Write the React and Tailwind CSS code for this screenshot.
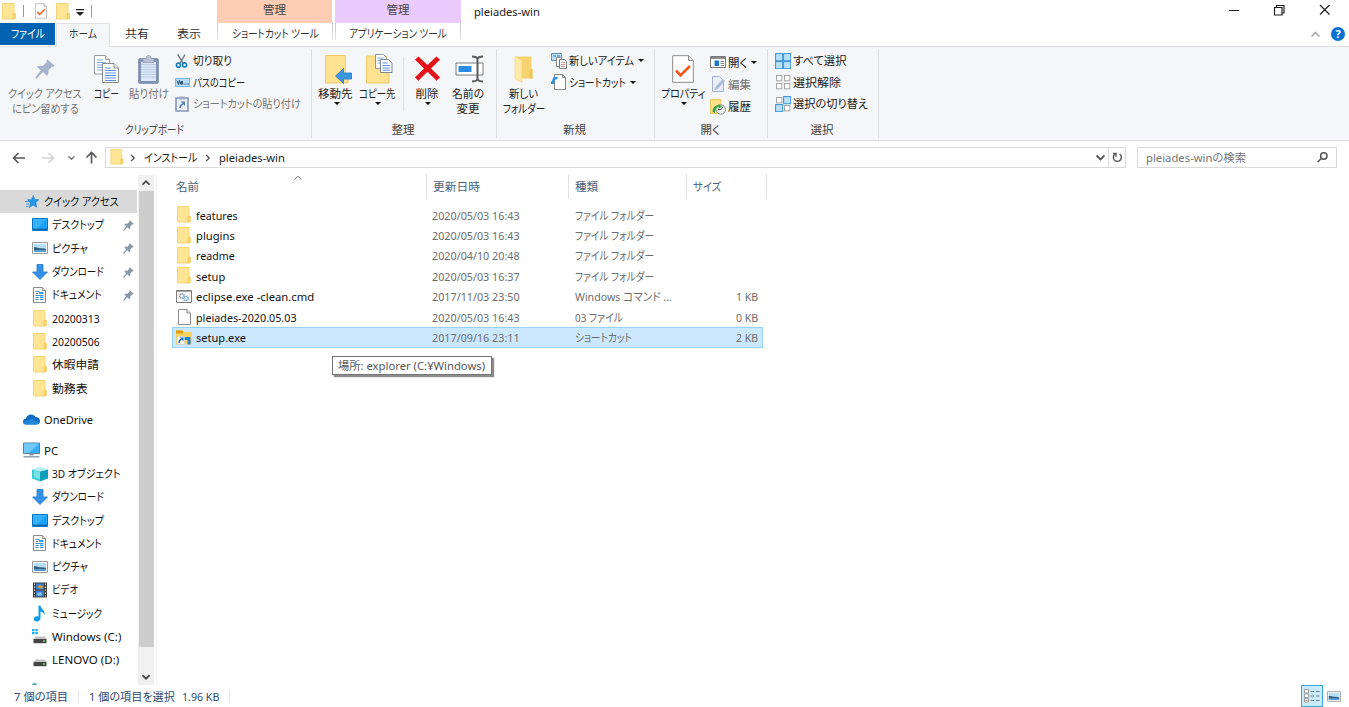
import React, { useLayoutEffect, useRef } from 'react';

// Condenses a run of text horizontally so that it fills exactly `w` pixels.
const Fit = ({ w, children, className = '' }) => {
    const ref = useRef(null);

    useLayoutEffect(() => {
        const el = ref.current;
        el.style.transform = `scaleX(${w / el.offsetWidth})`;
    }, [w, children]);

    return (
        <span className={`block shrink-0 pt-px ${className}`} style={{ width: w }}>
            <span ref={ref} className="inline-block origin-left whitespace-pre align-top">{children}</span>
        </span>
    );
};

const Folder = ({ className = 'w-[14px] h-[17px]' }) => (
    <svg className={`shrink-0 ${className}`} viewBox="0 0 14 17">
        <path d="M.5.5h11.500v15.500H.5z" fill="#ffe594" stroke="#f5d577" />
        <path d="M11 10.500h2.500v4.700l-.8.8H11z" fill="#f8d977" stroke="#ebc658" strokeWidth=".7" />
    </svg>
);

const Caret = ({ className = '' }) => (
    <svg className={`w-[6px] h-[3px] shrink-0 ${className}`} viewBox="0 0 6 3"><path d="M0 0h6L3 3z" fill="#111" /></svg>
);

const Chevron = ({ d, size = 'w-[8px] h-[8px]', color = '#555', sw = 1.3 }) => (
    <svg className={`shrink-0 ${size}`} viewBox="0 0 8 8" fill="none" stroke={color} strokeWidth={sw}><path d={d} /></svg>
);

const UP = 'M.5 5.7L4 2.2l3.5 3.5';
const DOWN = 'M.5 2.2L4 5.7l3.5-3.5';
const RIGHT = 'M2.2 1L5.2 4l-3 3';

const CheckDoc = ({ className }) => (
    <svg className={`shrink-0 ${className}`} viewBox="0 0 22 28">
        <path d="M.7.7h15.8l4.8 4.8v21.8H.7z" fill="#fff" stroke="#8b8b8b" />
        <path d="M16.5.7v4.8h4.8" fill="#e8e8e8" stroke="#8b8b8b" />
        <path d="M4 15.500l4.500 4.800L18 11" fill="none" stroke="#f0591b" strokeWidth="2.600" />
    </svg>
);

const PinShape = ({ className, color }) => (
    <svg className={`shrink-0 ${className}`} viewBox="0 0 20 20" fill={color}>
        <path d="M12.4.4l7.2 6.4-1.7 1.4-1.1-.5-3.6 4.1c.5 2 .1 3.7-1.2 5L7.8 13 1.6 19.8.2 18.700l5.600-7.400L2 7.800C3.400 6.500 5.400 6.400 7.700 7l4.200-3.900-.7-1.300z" />
    </svg>
);

const CopyIcon = () => (
    <svg className="w-[25px] h-[28px]" viewBox="0 0 25 28">
        <path d="M.5.5h11l4 4V19H.5z" fill="#fff" stroke="#979ca3" />
        <path d="M11.500.5v4h4" fill="#eee" stroke="#979ca3" />
        <path d="M3 5h6M3 7.500h9M3 10h9M3 12.500h6M3 15h6" stroke="#7eabe9" />
        <path d="M8.500 8.500h11.500l4.500 4.500v14.500h-16z" fill="#fff" stroke="#858b94" />
        <path d="M20 8.500v4.500h4.500" fill="#eee" stroke="#858b94" />
        <path d="M11 13h6M11 15.500h11M11 18h11M11 20.500h11M11 23h11M11 25.500h11" stroke="#5993e6" strokeWidth="1.200" />
    </svg>
);

const PasteIcon = () => (
    <svg className="w-[21px] h-[29px]" viewBox="0 0 21 29">
        <rect x=".8" y="3.800" width="19.400" height="24.400" rx="1" fill="#8094b8" stroke="#7184a9" />
        <path d="M3 7h15v19H3z" fill="#dce6f7" />
        <path d="M3 9.500h15M3 12h15M3 14.500h15M3 17h15M3 19.500h15M3 22h15" stroke="#bccdea" />
        <path d="M5 3.500h3C8 1.500 9 .5 10.500.5S13 1.500 13 3.500h3v4H5z" fill="#b9c3d3" stroke="#8894aa" strokeWidth=".7" />
    </svg>
);

const MoveIcon = () => (
    <svg className="w-[27px] h-[29px] ml-[5px]" viewBox="0 0 27 29">
        <path d="M.5.5h20v19h2.500v8.500H.5z" fill="#ffe291" stroke="#edcb68" />
        <path d="M10.500 21l8-7.500v4.500h8v6h-8v4.500z" fill="#3c97e3" stroke="#2278c5" strokeWidth=".8" />
    </svg>
);

const CopyToIcon = () => (
    <svg className="w-[27px] h-[30px] ml-[4px]" viewBox="0 0 27 30">
        <path d="M.5 2h20v18h2.500v9H.5z" fill="#ffe291" stroke="#edcb68" />
        <path d="M9.500.5h8l3 3v11h-11z" fill="#fff" stroke="#8f959e" />
        <path d="M11.500 4h6M11.500 6.500h7M11.500 9h6" stroke="#77a4e0" />
        <path d="M14.500 5.500h8l3.500 3.500v9.500H14.500z" fill="#fff" stroke="#7e8691" />
        <path d="M16.500 9h5M16.500 11.500h7.500M16.500 14h7.500M16.500 16.200h7.500" stroke="#5993e6" />
    </svg>
);

const DeleteIcon = () => (
    <svg className="w-[25px] h-[25px] mb-px" viewBox="0 0 25 25">
        <path d="M3.500.5l9 8.500 9-8.500L25 3.800 16 12.500l9 8.800-3.300 3.400-9.200-9-9.200 9L0 21.300l9-8.800L0 3.800z" fill="#e3131b" />
    </svg>
);

const RenameIcon = () => (
    <svg className="w-[29px] h-[28px] ml-[2px]" viewBox="0 0 29 28">
        <path d="M1 8h27v12H1z" fill="#fff" stroke="#7b7b7b" />
        <path d="M3.500 11h13v6h-13z" fill="#2a8be5" />
        <path d="M17 1.500q4 0 5.500 2Q24 1.500 28 1.500M22.500 3v22M17 26.500q4 0 5.500-2q1.500 2 5.500 2" fill="none" stroke="#5c5c5c" strokeWidth="2" />
    </svg>
);

const NewFolderIcon = () => (
    <svg className="w-[19px] h-[28px]" viewBox="0 0 19 28">
        <path d="M1 1.500h16.500V14l1 1v8.500H7z" fill="#f6d36f" />
        <path d="M1 1.500l7 3.500v22.500L1 24z" fill="#ffe9a6" stroke="#f0d280" strokeWidth=".6" />
        <path d="M15.500 14h3v9.500h-3z" fill="#efc65a" />
    </svg>
);

const Scissors = () => (
    <svg className="w-[13px] h-[16px]" viewBox="0 0 15 16" fill="none">
        <path d="M3 .5l6.500 10M11.500.5L6 10.500" stroke="#6e7a87" strokeWidth="1.600" />
        <circle cx="4" cy="12.800" r="2.300" stroke="#1c7fc4" strokeWidth="1.900" />
        <circle cx="11" cy="12.500" r="2.300" stroke="#1c7fc4" strokeWidth="1.900" />
    </svg>
);

const PathIcon = () => (
    <svg className="w-[15px] h-[9px]" viewBox="0 0 15 9">
        <path d="M.5.5h14v8H.5z" fill="#b5dcf7" stroke="#7fb9e0" />
        <path d="M2 2.500l1.500 4 1-4 1.500 4 1-3.500 1 3.500M9.500 6h1M11.500 6h1M13 6h.8" fill="none" stroke="#27445e" />
    </svg>
);

const PasteShortcut = () => (
    <svg className="w-[14px] h-[16px]" viewBox="0 0 14 16">
        <path d="M1 2h12v13H1z" fill="#eaf0fa" stroke="#8497b8" strokeWidth="1.600" />
        <path d="M4 .5h6v3H4z" fill="#a0aec5" />
        <path d="M5 12c0-2.500 1-3.500 3-4" fill="none" stroke="#5f7ba9" strokeWidth="1.600" />
        <path d="M5.500 5.500H10V10z" fill="#5f7ba9" />
    </svg>
);

const NewItemIcon = () => (
    <svg className="w-[16px] h-[16px]" viewBox="0 0 16 16">
        <path d="M.5.5h10v7H.5z" fill="#bfe1f8" stroke="#5c8fb3" />
        <path d="M2 3h3M6 3h3" stroke="#2d7fb9" />
        <path d="M5.500 4.500h5v9h-5z" fill="#fff" stroke="#888" />
        <path d="M8.500 6.500h5l2 2v7h-7z" fill="#fff" stroke="#777" />
        <path d="M10 9.500h4M10 11.500h4M10 13.500h4" stroke="#d0848c" strokeWidth=".9" />
    </svg>
);

const ShortcutIcon = () => (
    <svg className="w-[16px] h-[16px]" viewBox="0 0 16 16">
        <path d="M3.500.5h8l3 3v12h-11z" fill="#fff" stroke="#858585" />
        <path d="M11.500.5v3h3" fill="none" stroke="#858585" />
        <path d="M2.500 3H7l-1 2.500H4L3 8H.5z" fill="#3293df" />
        <path d="M0 7.500h4L3 10H0z" fill="#3293df" />
    </svg>
);

const OpenIcon = () => (
    <svg className="w-[16px] h-[12px]" viewBox="0 0 16 12">
        <path d="M.5.5h15v11H.5z" fill="#fff" stroke="#777" />
        <path d="M1 1h14v2H1z" fill="#8a8a8a" />
        <path d="M4.500 4.500H9v5.500H4.500z" fill="#1876cf" />
        <path d="M10.500 5.500h3.500M10.500 7.500h3.500M10.500 9.500h3.500" stroke="#8c8c8c" />
    </svg>
);

const EditIcon = () => (
    <svg className="w-[16px] h-[16px] ml-px" viewBox="0 0 16 16">
        <path d="M1.500.5h7l4 4v11h-11z" fill="#e9effa" stroke="#a2b2cf" />
        <path d="M3.500 14.500l1-3.500 7.500-8 2 2-7.500 8z" fill="#a9bad6" />
    </svg>
);

const HistoryIcon = () => (
    <svg className="w-[16px] h-[16px]" viewBox="0 0 16 16">
        <path d="M.5.5h10.500v14H.5z" fill="#ffe08a" stroke="#eac75f" />
        <circle cx="10.800" cy="10.500" r="4.700" fill="#f0f0f0" stroke="#8a8a8a" />
        <path d="M10.800 10.500L13 8M10.800 10.500H8" stroke="#444" />
        <path d="M2.500 12.500c.5-5 3-6.500 6-6l-.5-2 4 3.200-3.500 2V8C6.500 8 5 10 5 14.500z" fill="#37a63c" />
    </svg>
);

const SelectIcon = ({ on }) => (
    <svg className="w-[16px] h-[16px]" viewBox="0 0 16 16">
        {[[0, 0], [8, 0], [0, 8], [8, 8]].map(([x, y], i) => {
            const filled = on[i];
            const inset = filled ? 0.6 : 1.5;
            return (
                <rect key={i} x={x + inset} y={y + inset} width={8 - inset * 2 + 0.3} height={8 - inset * 2 + 0.3}
                    fill={filled ? '#b9e1fb' : '#fff'} stroke={filled ? '#3492d4' : '#a5a5a5'} />
            );
        })}
    </svg>
);

const Star = () => (
    <svg className="w-[14px] h-[14px]" viewBox="0 0 14 14">
        <path d="M8.300.5l1.500 4 4.100.2-3.200 2.800 1.100 4.700-3.700-2.200-3.700 2.600 1-4.600L2.500 4.800l4-.3z" fill="#2196e8" stroke="#0c76c9" strokeWidth=".5" />
        <path d="M0 6.500h4M1 9h3M1 11.500h2.500" stroke="#2b90db" strokeWidth=".9" />
    </svg>
);

const Desktop = () => (
    <svg className="w-[16px] h-[13px]" viewBox="0 0 16 13">
        <path d="M.5.5h15v12H.5z" fill="#16a0f8" stroke="#0874c4" />
        <path d="M1 1h14L5 11H1z" fill="#35b1ff" />
        <path d="M1 11.300h14" stroke="#07558f" />
    </svg>
);

const Picture = ({ className = 'w-[16px] h-[12px]' }) => (
    <svg className={className} viewBox="0 0 16 12">
        <path d="M.5.5h15v11H.5z" fill="#fff" stroke="#9a9a9a" />
        <path d="M2 2h12v8H2z" fill="#b4dff7" />
        <path d="M2 5c2 0 4 1 6 1.200s4 0 6 .8v1.500H2z" fill="#315f7c" />
        <path d="M2 8.300h12V10H2z" fill="#5b9bd0" />
    </svg>
);

const DownArrow = () => (
    <svg className="w-[16px] h-[16px]" viewBox="0 0 16 16">
        <path d="M5 .5h6V8h4.500L8 15.500.5 8H5z" fill="#3591e8" stroke="#2478c8" strokeWidth=".8" />
    </svg>
);

const Document = () => (
    <svg className="w-[13px] h-[16px]" viewBox="0 0 13 16">
        <path d="M.5.5h9l3 3v12H.5z" fill="#fff" stroke="#8b8b8b" />
        <path d="M9.500.5v3h3" fill="#ddd" stroke="#8b8b8b" />
        <path d="M2.500 4.500h4M2.500 6.500h2.500M2.500 8.500h8M2.500 10.500h3.500M2.500 12.500h3M7 12.500h3.500" stroke="#4e8db8" />
        <path d="M6 5h4.500v2H6zM7 9.500h3.500v1.500H7z" fill="#2b9be5" />
    </svg>
);

const OneDrive = () => (
    <svg className="w-[17px] h-[11px]" viewBox="0 0 17 11">
        <path d="M3 10.500C1 10.500 0 9.300 0 7.700 0 6 1.200 4.900 2.900 4.800 3.500 2 5.500.4 8 .4c2 0 3.700 1 4.500 2.700 2.600 0 4.300 1.500 4.500 3.700.1 2.200-1.200 3.700-3.300 3.700z" fill="#0f6cc4" />
        <path d="M3 10.500c-1.500 0-2.600-.9-2.900-2.100L8.500 4.500l8 4c-.5 1.300-1.500 2-2.800 2z" fill="#1f86da" />
    </svg>
);

const Pc = () => (
    <svg className="w-[17px] h-[16px]" viewBox="0 0 17 16">
        <path d="M.5 1h16v10.500H.5z" fill="#37aef5" stroke="#5f7f98" />
        <path d="M1 1.500h15L6 11H1z" fill="#70c8fb" />
        <path d="M6.500 12h4v1.500h-4z" fill="#8b97a5" />
        <path d="M.5 14.800h16" stroke="#8292a6" strokeWidth="1.300" />
    </svg>
);

const Cube = () => (
    <svg className="w-[16px] h-[16px]" viewBox="0 0 16 16">
        <path d="M0 3.500L8 .5l8 3-8 2z" fill="#b8f1f4" />
        <path d="M0 3.500l8 2v10l-8-3z" fill="#3ccbd7" />
        <path d="M8 5.500l8-2v9l-8 3z" fill="#0d9fb9" />
        <path d="M2 4.800l6 1.500v7l-6-2.500z" fill="#7ce1e5" />
    </svg>
);

const Video = () => (
    <svg className="w-[14px] h-[16px]" viewBox="0 0 14 16">
        <path d="M0 .5h14v15H0z" fill="#3e3e3e" />
        <path d="M3 1.500h8v6H3zM3 8.500h8v6H3z" fill="#3c80cb" />
        <path d="M6 3l4 1-1 3-4-1z" fill="#d79b38" />
        <path d="M4 11l4-1 1 3-4 1z" fill="#8dc0ef" />
        <path d="M1.500 1.500v13M12.500 1.500v13" stroke="#e8e8e8" strokeDasharray="1.500 1.500" />
    </svg>
);

const Music = () => (
    <svg className="w-[13px] h-[17px]" viewBox="0 0 13 17">
        <path d="M5.500.5h2C8 4 12.500 5 11.500 10.500 11 8 9.500 7 7.500 6.800V13c0 2-1.600 3.500-3.700 3.500C2 16.500.8 15.500.8 14c0-1.900 2-3.300 4.700-2.700z" fill="#129be8" />
    </svg>
);

const Drive = ({ windows }) => (
    <svg className="w-[15px] h-[15px]" viewBox="0 0 15 15">
        {windows && <path d="M0 0h2.500v2.300H0zM3.300 0h2.500v2.300H3.300zM0 3h2.500v2.300H0zM3.300 3h2.500v2.300H3.300z" fill="#16aef0" />}
        <path d="M3.500 7.500h9.500l1.500 2.500H1.500z" fill="#c2c2c2" />
        <path d="M1.500 10h13v4.200h-13z" fill="#454545" />
        <path d="M11 12h2" stroke="#69dd64" strokeWidth="1.300" />
    </svg>
);

const CmdIcon = () => (
    <svg className="w-[16px] h-[13px]" viewBox="0 0 16 13">
        <path d="M.5.5h15v12H.5z" fill="#f7f7f7" stroke="#7d7d7d" />
        <path d="M1 1.300h14" stroke="#8b8b8b" />
        <circle cx="6" cy="6" r="2.200" fill="none" stroke="#8fa0ae" strokeWidth="1.500" strokeDasharray="1.400 .4" />
        <circle cx="10" cy="8.500" r="2.200" fill="#d7ebf7" stroke="#77a9ca" strokeWidth="1.300" strokeDasharray="1.400 .4" />
    </svg>
);

const BlankDoc = () => (
    <svg className="w-[13px] h-[16px]" viewBox="0 0 13 16">
        <path d="M.5.5h8.500l3.500 3.500v11.500H.5z" fill="#fff" stroke="#8b8b8b" />
        <path d="M9 .5V4h3.500" fill="#eee" stroke="#8b8b8b" />
    </svg>
);

const ExplorerShortcut = () => (
    <svg className="w-[16px] h-[15px]" viewBox="0 0 16 15">
        <path d="M0 .5h6l1.500 1.500H16v12.500H0z" fill="#ffd35c" />
        <path d="M0 .5h6.500l1 1.500-1 1.500H0z" fill="#e09a10" />
        <path d="M7.500 7h7v7.500h-3V10H7.500z" fill="#2482d3" />
        <path d="M1 6.500h7.500v8H1z" fill="#fff" stroke="#b9c4cf" strokeWidth=".6" />
        <path d="M3 13c0-2.500 1-3.500 2.500-3.800" fill="none" stroke="#1d64b4" strokeWidth="1.400" />
        <path d="M3.800 7.500h3.700v3.700z" fill="#1d64b4" />
    </svg>
);

const BigButton = ({ icon, lines, caret, className, muted }) => (
    <div className={`flex flex-col items-center pt-[8px] shrink-0 ${className}`}>
        <div className="h-[28px] flex items-center justify-center">{icon}</div>
        <div className={`mt-[3px] flex flex-col items-center leading-[14px] ${muted ? 'text-[#747474]' : 'text-[#222]'}`}>
            {lines.map(([text, w]) => <Fit key={text} w={w}>{text}</Fit>)}
        </div>
        {caret && <Caret className="ml-[2px] mt-px" />}
    </div>
);

const SmallButton = ({ icon, text, w, caret, muted, className = 'h-[21.5px]' }) => (
    <div className={`flex items-center ${className} ${muted ? 'text-[#747474]' : 'text-[#222]'}`}>
        <div className="w-[18px] flex items-center shrink-0">{icon}</div>
        <Fit w={w}>{text}</Fit>
        {caret && <Caret className="ml-[4px]" />}
    </div>
);

const Group = ({ label, w, className, children }) => (
    <div className={`flex shrink-0 ${className}`}>
        <div className="flex-1 flex flex-col">
            <div className="h-[75px] flex">{children}</div>
            <div className="h-[15px] leading-[14px] flex justify-center pr-[2px] text-[#444]"><Fit w={w}>{label}</Fit></div>
        </div>
        <div className="w-px my-[2px] bg-[#dcdddf]" />
    </div>
);

const TitleBar = () => (
    <div className="h-[23px] flex shrink-0">
        <div className="w-[217px] flex items-center pl-[2px] pb-px">
            <Folder className="w-[14px] h-[17px]" />
            <div className="w-px h-[12px] bg-[#999] ml-[7px]" />
            <CheckDoc className="w-[12px] h-[16px] ml-[11px]" />
            <Folder className="w-[14px] h-[17px] ml-[9px]" />
            <svg className="w-[8px] h-[7px] ml-[6px] mt-[2px]" viewBox="0 0 8 7"><path d="M0 0h8v1.200H0zM0 3h8L4 7z" fill="#222" /></svg>
            <div className="w-px h-[12px] bg-[#999] ml-[7px]" />
        </div>
        <div className="w-[115px] bg-[#ffccb4] flex justify-center items-center pb-[4px] text-[#444]"><Fit w={23}>管理</Fit></div>
        <div className="w-[126px] ml-[3px] bg-[#ebcaff] flex justify-center items-center pb-[4px] text-[#444]"><Fit w={23}>管理</Fit></div>
        <Fit w={66} className="ml-[13px] leading-[22px] text-[#222]">pleiades-win</Fit>
        <div className="ml-auto flex items-start pr-[19px] pt-[4px]">
            <svg className="w-[101px] h-[12px]" viewBox="0 0 101 12" fill="none" stroke="#222" strokeWidth="1.200">
                <path d="M0 6.500h10M45.500 3.500h7.500V11h-7.500zM47.500 3.500V1.500h7.500V9h-2M91 1l9.500 9.500M100.500 1L91 10.500" />
            </svg>
        </div>
    </div>
);

const ToolTab = ({ text, w, className }) => (
    <div className={`flex justify-between ${className}`}>
        <div className="w-px h-[17px] bg-gradient-to-b from-[#c8c8c8] to-[#e6e6e6]" />
        <Fit w={w} className="leading-[20px]">{text}</Fit>
        <div className="w-px h-[17px] bg-gradient-to-b from-[#c8c8c8] to-[#e6e6e6]" />
    </div>
);

const TabRow = () => (
    <div className="h-[24px] flex shrink-0 border-b border-[#dfe0e1] text-[#333]">
        <div className="w-[55px] h-[22px] bg-[#0063b1] text-white flex justify-center leading-[20px]"><Fit w={34}>ファイル</Fit></div>
        <div className="w-[54px] h-[24px] ml-px bg-[#f5f6f7] border border-b-0 border-[#dfe0e1] flex justify-center leading-[18px]"><Fit w={28}>ホーム</Fit></div>
        <Fit w={24} className="ml-[15px] leading-[20px]">共有</Fit>
        <Fit w={24} className="ml-[28px] leading-[20px]">表示</Fit>
        <ToolTab text="ショートカット ツール" w={87} className="w-[116px] ml-[16px]" />
        <ToolTab text="アプリケーション ツール" w={98} className="w-[126px] ml-[2px]" />
        <div className="ml-auto flex items-center pr-[4px] pb-[1px]">
            <Chevron d={UP} color="#a0a0a0" size="w-[9px] h-[9px]" />
            <div className="ml-[11px] w-[14px] h-[14px] rounded-full bg-[#0873d3] text-white text-[11px] leading-[14px] font-bold text-center">?</div>
        </div>
    </div>
);

const Ribbon = () => (
    <div className="h-[94px] flex shrink-0 bg-[#f5f6f7] border-b border-[#dadbdc]">
        <Group label="クリップボード" w={59} className="w-[312px]">
            <BigButton className="w-[90px]" muted icon={<PinShape className="w-[20px] h-[20px]" color="#a5b4cc" />} lines={[['クイック アクセス', 74], ['にピン留めする', 67]]} />
            <BigButton className="w-[32px]" icon={<CopyIcon />} lines={[['コピー', 25]]} />
            <BigButton className="w-[53px]" muted icon={<PasteIcon />} lines={[['貼り付け', 40]]} />
            <div className="pt-[3px]">
                <SmallButton icon={<Scissors />} text="切り取り" w={39} />
                <SmallButton icon={<PathIcon />} text="パスのコピー" w={52} />
                <SmallButton icon={<PasteShortcut />} text="ショートカットの貼り付け" w={108} muted />
            </div>
        </Group>
        <Group label="整理" w={23} className="w-[185px]">
            <BigButton className="w-[47px]" icon={<MoveIcon />} lines={[['移動先', 35]]} caret />
            <BigButton className="w-[36px]" icon={<CopyToIcon />} lines={[['コピー先', 36]]} caret />
            <div className="ml-[8px] w-px h-[54px] mt-[10px] bg-[#dcdddf]" />
            <BigButton className="w-[46px]" icon={<DeleteIcon />} lines={[['削除', 23]]} caret />
            <BigButton className="w-[36px]" icon={<RenameIcon />} lines={[['名前の', 32], ['変更', 23]]} />
        </Group>
        <Group label="新規" w={23} className="w-[158px]">
            <BigButton className="w-[53px]" icon={<NewFolderIcon />} lines={[['新しい', 29], ['フォルダー', 42]]} />
            <div className="pt-[3px] pl-px">
                <SmallButton icon={<NewItemIcon />} text="新しいアイテム" w={65} caret />
                <SmallButton icon={<ShortcutIcon />} text="ショートカット" w={57} caret />
            </div>
        </Group>
        <Group label="開く" w={19} className="w-[113px]">
            <BigButton className="w-[55px]" icon={<CheckDoc className="w-[22px] h-[28px]" />} lines={[['プロパティ', 44]]} caret />
            <div className="pt-[4px]">
                <SmallButton className="h-[22.300px]" icon={<OpenIcon />} text="開く" w={19} caret />
                <SmallButton className="h-[22.300px]" icon={<EditIcon />} text="編集" w={23} muted />
                <SmallButton className="h-[22.300px]" icon={<HistoryIcon />} text="履歴" w={23} />
            </div>
        </Group>
        <Group label="選択" w={23} className="w-[111px]">
            <div className="pt-[3px] pl-[7px]">
                <SmallButton icon={<SelectIcon on={[1, 1, 1, 1]} />} text="すべて選択" w={53} />
                <SmallButton icon={<SelectIcon on={[0, 0, 0, 0]} />} text="選択解除" w={48} />
                <SmallButton icon={<SelectIcon on={[0, 1, 1, 0]} />} text="選択の切り替え" w={75} />
            </div>
        </Group>
    </div>
);

const AddressBar = () => (
    <div className="h-[33px] flex items-center shrink-0 text-[#222]">
        <svg className="w-[105px] h-[20px] shrink-0" viewBox="0 0 105 20" fill="none" strokeWidth="1.600">
            <path d="M25 10H13.500M18.500 5l-5 5 5 5" stroke="#555" />
            <path d="M42 10h11.500M48.500 5l5 5-5 5" stroke="#d4d4d4" />
            <path d="M68.500 8.300l3 3 3-3" stroke="#777" strokeWidth="1.300" />
            <path d="M91.500 15.500V4.500M86.500 9.500l5-5 5 5" stroke="#555" />
        </svg>
        <div className="w-[1021px] h-[21px] border border-[#d9d9d9] flex items-center pl-[4px]">
            <Folder className="w-[14px] h-[16px] mb-px" />
            <div className="ml-[5px] flex"><Chevron d={RIGHT} /></div>
            <Fit w={53} className="ml-[7px]">インストール</Fit>
            <div className="ml-[7px] flex"><Chevron d={RIGHT} /></div>
            <Fit w={66} className="ml-[7px]">pleiades-win</Fit>
            <div className="ml-auto flex items-center h-full">
                <Chevron d={DOWN} size="w-[9px] h-[9px]" sw={1.6} />
                <div className="w-[17px] h-full ml-[3px] border-l border-[#d9d9d9] flex items-center justify-center">
                    <svg className="w-[11px] h-[11px]" viewBox="0 0 11 11" fill="none" stroke="#555" strokeWidth="1.400"><path d="M7.500 2A4 4 0 1 1 2.500 2.600M1 1.500h3v3.200" /></svg>
                </div>
            </div>
        </div>
        <div className="w-[200px] h-[21px] ml-[11px] border border-[#d9d9d9] flex items-center justify-between pl-[8px] pr-[8px] text-[#757575]">
            <Fit w={100}>pleiades-winの検索</Fit>
            <svg className="w-[11px] h-[11px]" viewBox="0 0 11 11" fill="none" stroke="#555" strokeWidth="1.500"><circle cx="6.800" cy="4" r="3.200" /><path d="M4.400 6.300L.6 10.300" /></svg>
        </div>
    </div>
);

const quickItems = [
    { icon: <Desktop />, text: 'デスクトップ', w: 52, pin: true },
    { icon: <Picture />, text: 'ピクチャ', w: 36, pin: true },
    { icon: <DownArrow />, text: 'ダウンロード', w: 52, pin: true },
    { icon: <Document />, text: 'ドキュメント', w: 50, pin: true },
    { icon: <Folder />, text: '20200313', w: 48 },
    { icon: <Folder />, text: '20200506', w: 48 },
    { icon: <Folder />, text: '休暇申請', w: 47 },
    { icon: <Folder />, text: '勤務表', w: 36 },
];

const pcItems = [
    { icon: <Cube />, text: '3D オブジェクト', w: 69 },
    { icon: <DownArrow />, text: 'ダウンロード', w: 52 },
    { icon: <Desktop />, text: 'デスクトップ', w: 52 },
    { icon: <Document />, text: 'ドキュメント', w: 50 },
    { icon: <Picture />, text: 'ピクチャ', w: 36 },
    { icon: <Video />, text: 'ビデオ', w: 26 },
    { icon: <Music />, text: 'ミュージック', w: 50 },
    { icon: <Drive windows />, text: 'Windows (C:)', w: 69 },
    { icon: <Drive />, text: 'LENOVO (D:)', w: 67 },
];

const NavRow = ({ icon, text, w, pin, root, active }) => (
    <div className={`h-[23.300px] shrink-0 flex items-center ${root ? 'pl-[23px]' : 'pl-[31px]'} ${active ? 'bg-[#d9d9d9]' : ''}`}>
        <div className="w-[17px] flex justify-center shrink-0">{icon}</div>
        <Fit w={w} className="ml-[4px]">{text}</Fit>
        {pin && <PinShape className="w-[11px] h-[11px] ml-auto mr-[3px] mt-px" color="#8b98a5" />}
    </div>
);

const Sidebar = () => (
    <div className="w-[157px] h-[511px] flex shrink-0 border-r border-[#f0f0f0] overflow-hidden text-[#111]">
        <div className="w-[137px] pt-[16px] flex flex-col overflow-hidden">
            <NavRow root active icon={<Star />} text="クイック アクセス" w={75} />
            {quickItems.map((item) => <NavRow key={item.text} {...item} />)}
            <div className="h-[7.800px] shrink-0" />
            <NavRow root icon={<OneDrive />} text="OneDrive" w={49} />
            <div className="h-[7.800px] shrink-0" />
            <NavRow root icon={<Pc />} text="PC" w={14} />
            {pcItems.map((item) => <NavRow key={item.text} {...item} />)}
            <div className="w-[5px] h-[3px] mt-[11.500px] ml-[32px] shrink-0 rounded-t-full bg-[#4da8b8]" />
        </div>
        <div className="w-[16px] ml-px mt-px flex flex-col items-center bg-[#f0f0f0]">
            <div className="h-[16px] flex items-center"><Chevron d={UP} color="#444" sw={1.8} /></div>
            <div className="w-[15px] h-[456px] bg-[#cdcdcd]" />
            <div className="flex-1 flex items-end pb-[4px]"><Chevron d={DOWN} color="#444" sw={1.8} /></div>
        </div>
    </div>
);

const files = [
    { icon: <Folder />, name: 'features', nw: 42, date: '2020/05/03 16:43', type: 'ファイル フォルダー', tw: 79 },
    { icon: <Folder />, name: 'plugins', nw: 39, date: '2020/05/03 16:43', type: 'ファイル フォルダー', tw: 79 },
    { icon: <Folder />, name: 'readme', nw: 39, date: '2020/04/10 20:48', type: 'ファイル フォルダー', tw: 79 },
    { icon: <Folder />, name: 'setup', nw: 29, date: '2020/05/03 16:37', type: 'ファイル フォルダー', tw: 79 },
    { icon: <CmdIcon />, name: 'eclipse.exe -clean.cmd', nw: 118, date: '2017/11/03 23:50', type: 'Windows コマンド ...', tw: 97, size: '1 KB' },
    { icon: <BlankDoc />, name: 'pleiades-2020.05.03', nw: 101, date: '2020/05/03 16:43', type: '03 ファイル', tw: 48, size: '0 KB' },
    { icon: <ExplorerShortcut />, name: 'setup.exe', nw: 50, date: '2017/09/16 23:11', type: 'ショートカット', tw: 57, size: '2 KB', selected: true },
];

const HeaderCell = ({ text, w, className }) => (
    <div className={`h-[25px] border-r border-[#e2e2e2] flex items-center text-[#4c607a] ${className}`}><Fit w={w}>{text}</Fit></div>
);

const FileList = () => (
    <div className="relative flex-1 pl-[15px]">
        <div className="flex h-[31px]">
            <HeaderCell text="名前" w={23} className="w-[255px] pl-[4px]" />
            <HeaderCell text="更新日時" w={47} className="w-[142px] pl-[6px]" />
            <HeaderCell text="種類" w={23} className="w-[118px] pl-[6px]" />
            <HeaderCell text="サイズ" w={28} className="w-[80px] pl-[6px]" />
        </div>
        <div className="absolute left-[136.500px] top-0"><Chevron d={UP} color="#666" sw={1} /></div>
        {files.map((f) => (
            <div key={f.name} className={`w-[591px] h-[20.400px] flex items-center border ${f.selected ? 'bg-[#cce8ff] border-[#99d1ff]' : 'border-transparent'}`}>
                <div className="w-[22.500px] pb-px flex justify-center shrink-0">{f.icon}</div>
                <div className="w-[236.500px] shrink-0 text-[#111]"><Fit w={f.nw}>{f.name}</Fit></div>
                <div className="w-[142.500px] shrink-0 text-[#6d6d6d]"><Fit w={88}>{f.date}</Fit></div>
                <div className="text-[#6d6d6d]"><Fit w={f.tw}>{f.type}</Fit></div>
                {f.size && <Fit w={22} className="ml-auto mr-[4px] text-[#6d6d6d]">{f.size}</Fit>}
            </div>
        ))}
        <div className="absolute left-[175px] top-[182px] w-[160px] h-[19px] bg-white border border-[#767676] shadow-[2px_2px_1px_#8c8c8c] flex items-center pl-[5px] text-[#575757]">
            <Fit w={147}>場所: explorer (C:¥Windows)</Fit>
        </div>
    </div>
);

const StatusBar = () => (
    <div className="h-[22px] flex items-center shrink-0 text-[#2f4a70] pl-[14px]">
        <Fit w={54}>7 個の項目</Fit>
        <div className="w-px h-[13px] ml-[10px] bg-[#e6e6e6]" />
        <Fit w={86} className="ml-[10px]">1 個の項目を選択</Fit>
        <Fit w={37} className="ml-[7px]">1.96 KB</Fit>
        <div className="w-px h-[13px] ml-[10px] bg-[#e6e6e6]" />
        <div className="ml-auto mr-[4px] w-[22px] h-[22px] bg-[#cbeaf9] border border-[#35a7dc] flex items-center justify-center">
            <svg className="w-[16px] h-[14px]" viewBox="0 0 16 14" fill="#fff" stroke="#8a8a8a">
                <path d="M.5.5h4v3.500h-4zM.5 5h4v3.500h-4zM.5 9.500h4V13h-4z" strokeWidth=".8" />
                <path d="M6.500 2.500H10M6.500 7H10M6.500 11.500H10M12 2.500h3.500M12 7h3.500M12 11.500h3.500" stroke="#6e7b86" />
                <path d="M1.500 11.500h2" stroke="#d26b62" />
            </svg>
        </div>
        <Picture className="w-[14px] h-[11px] mr-[8px]" />
    </div>
);

const App = () => {
    return (
        <div className="w-[1349px] h-[707px] overflow-hidden flex flex-col bg-white text-[11.5px] leading-[16px] font-['Noto_Sans','Noto_Sans_CJK_JP',sans-serif] [font-feature-settings:'palt']">
            <TitleBar />
            <TabRow />
            <Ribbon />
            <AddressBar />
            <div className="h-[511px] flex shrink-0">
                <Sidebar />
                <FileList />
            </div>
            <StatusBar />
        </div>
    );
};

export default App;
